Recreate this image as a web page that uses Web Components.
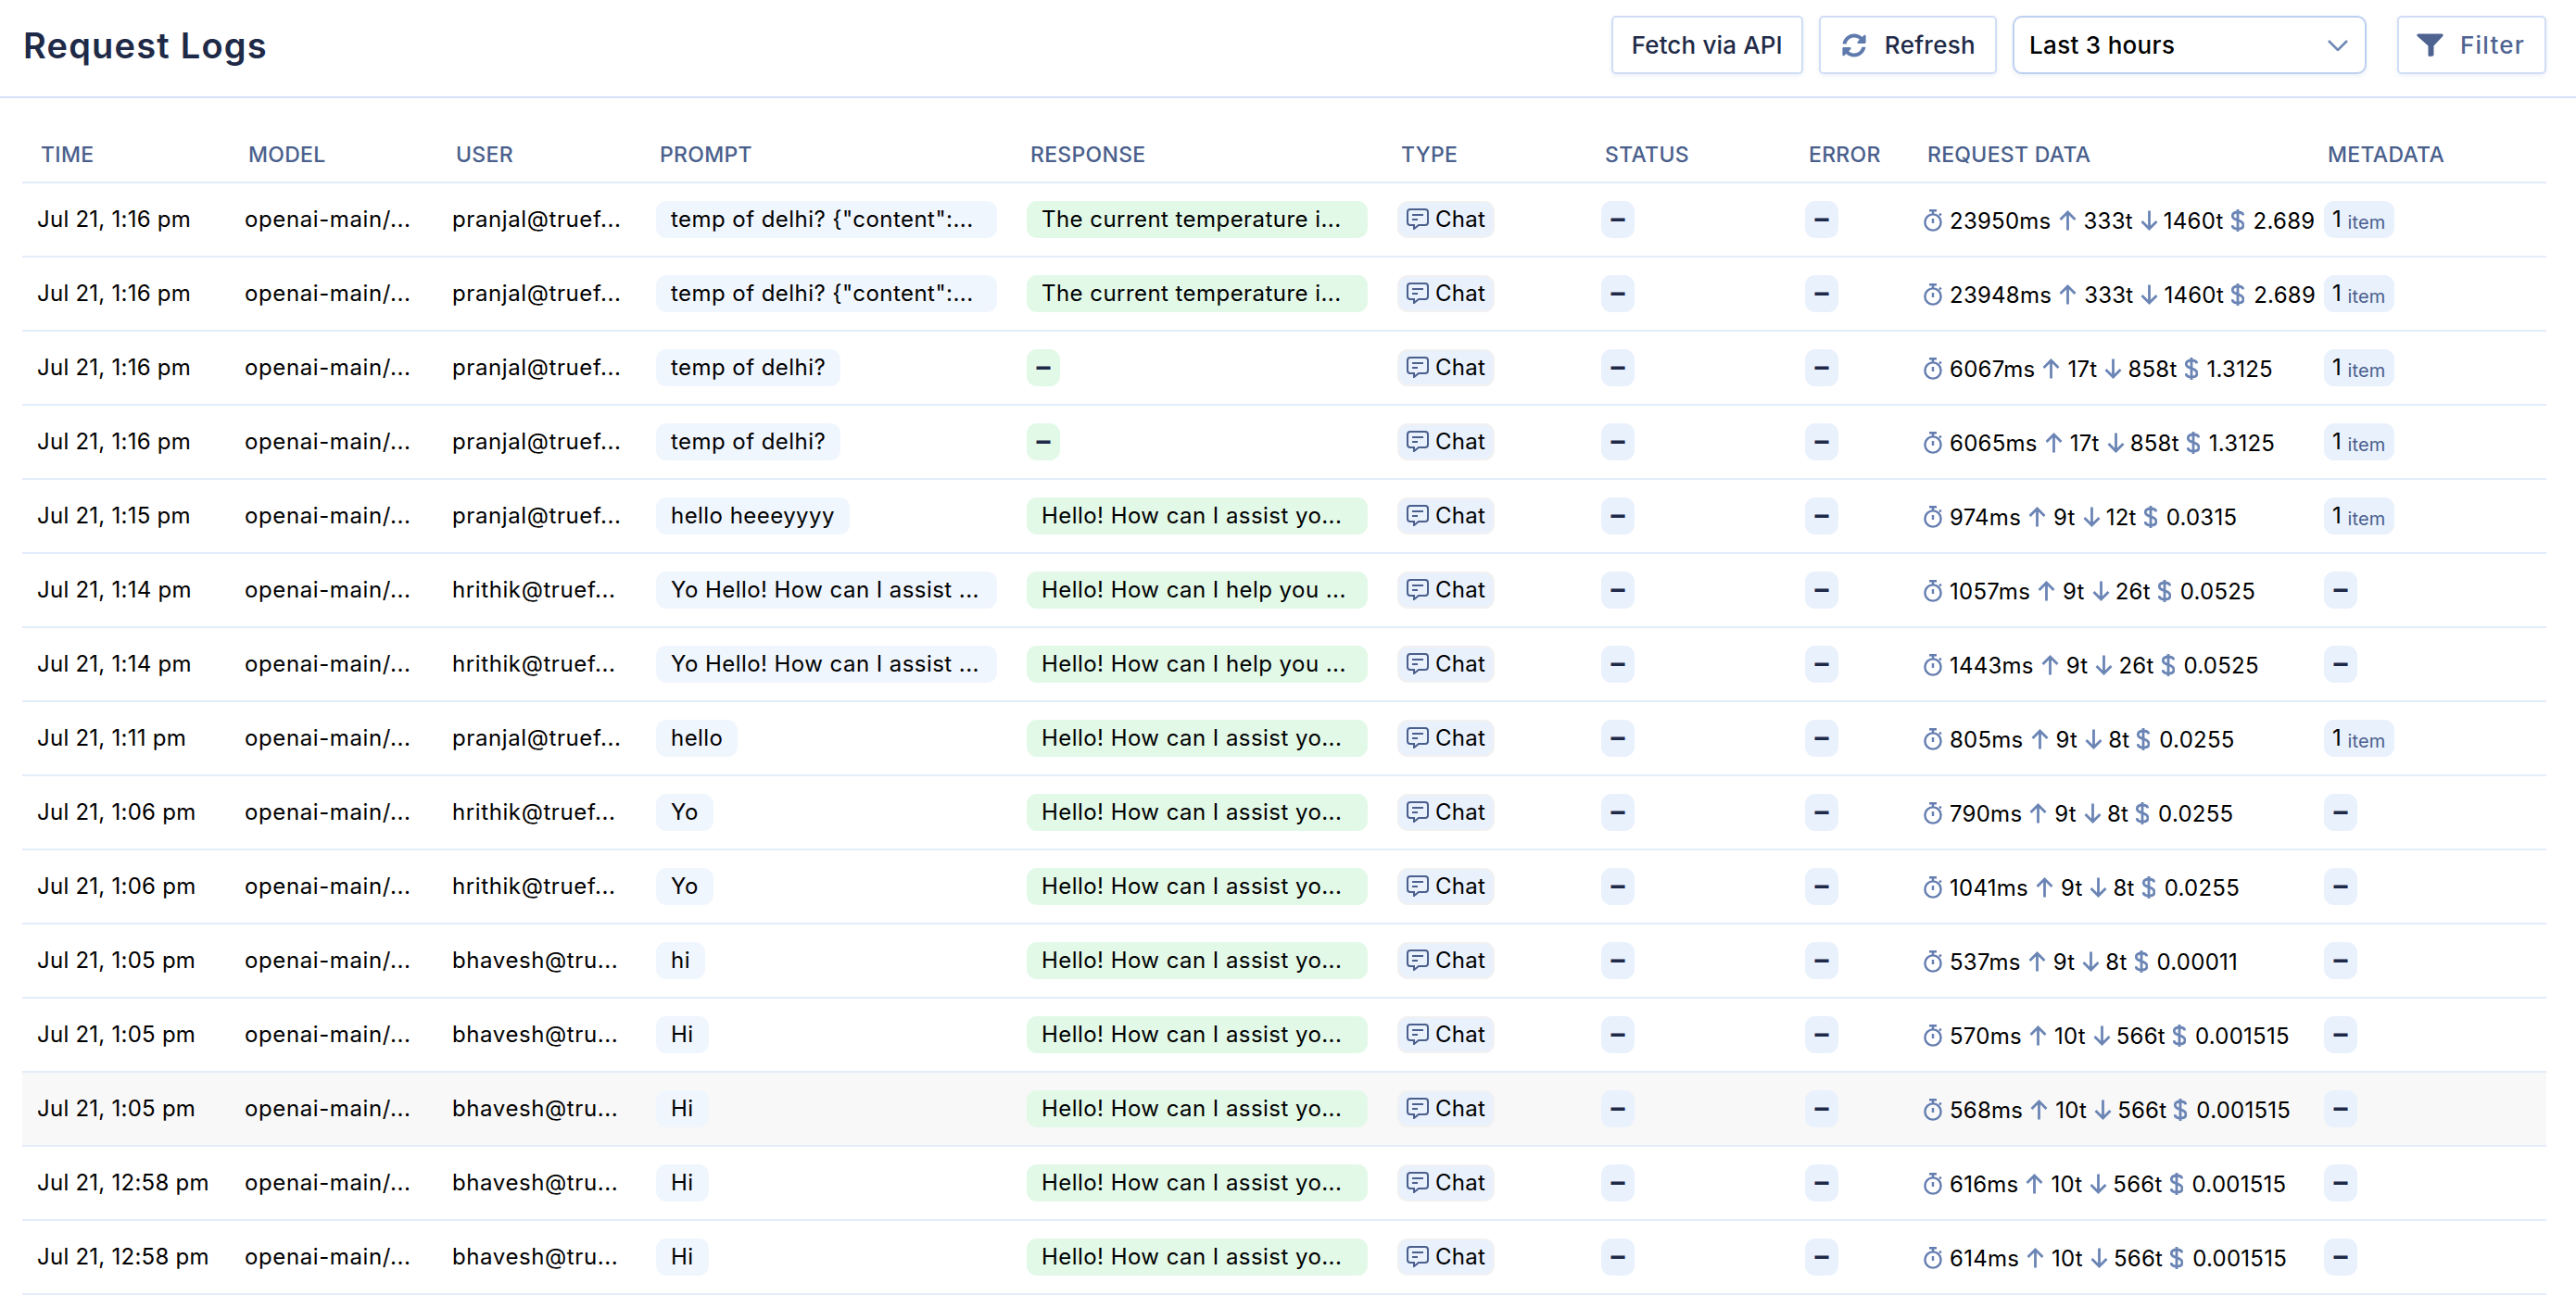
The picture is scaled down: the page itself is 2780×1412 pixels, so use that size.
<!DOCTYPE html>
<html><head><meta charset="utf-8"><title>Request Logs</title>
<style>
html,body{margin:0;background:#fff;color:#000;font-family:Inter,"Liberation Sans",sans-serif}
</style></head><body>
<log-app></log-app>
<script>
const COLS = '224px 224px 220px 400px 400px 220px 220px 128px 432px 256px'
const ICONS = {
    sync: `<svg width="26" height="26" viewBox="0 0 512 512"><path fill="#5f7bad" d="M370.72 133.28C339.458 104.008 298.888 87.962 255.848 88c-77.458.068-144.328 53.178-162.791 126.85-1.344 5.363-6.122 9.15-11.651 9.15H24.103c-7.498 0-13.194-6.807-11.807-14.176C33.933 94.924 134.813 8 256 8c66.448 0 126.791 26.136 171.315 68.685L463.03 40.97C478.149 25.851 504 36.559 504 57.941V192c0 13.255-10.745 24-24 24H345.941c-21.382 0-32.09-25.851-16.971-40.971l41.75-41.749zM32 296h134.059c21.382 0 32.09 25.851 16.971 40.971l-41.75 41.75c31.262 29.273 71.835 45.319 114.876 45.28 77.418-.07 144.315-53.144 162.787-126.849 1.344-5.363 6.122-9.15 11.651-9.15h57.304c7.498 0 13.194 6.807 11.807 14.176C478.067 417.076 377.187 504 256 504c-66.448 0-126.791-26.136-171.315-68.685L48.97 471.03C33.851 486.149 8 475.441 8 454.059V320c0-13.255 10.745-24 24-24z"/></svg>`,
    funnel: `<svg width="29" height="25" viewBox="0 0 29 25"><path fill="#4f6391" d="M2 .5h25c1.500 0 2.200 1.500 1.300 2.600L18.500 13.500v9.500c0 .8-.5 1.300-1.200 1.500l-3 .5c-1 .1-1.800-.6-1.800-1.500V13.500L.7 3.100C-.2 2 .5.500 2 .5z"/></svg>`,
    chevron: `<svg width="22" height="12" viewBox="0 0 22 12"><path d="M1 1l10 10L21 1" fill="none" stroke="#6f8ab5" stroke-width="2.600"/></svg>`,
    chat: `<svg width="24" height="23" viewBox="0 0 24 23" fill="none" stroke="#4a5f8c" stroke-width="2"><path d="M4 1h16a3 3 0 0 1 3 3v11a3 3 0 0 1-3 3H13l-5 4v-4H4a3 3 0 0 1-3-3V4a3 3 0 0 1 3-3z"/><path d="M6 7h12M6 12h6"/></svg>`,
    timer: `<svg width="20" height="24" viewBox="0 0 20 24" fill="none" stroke="#647db0" stroke-width="2.400"><circle cx="10" cy="14" r="8.600"/><path d="M6 1.200h8M10 1.200v4M10 10v5M17 6.500l1.800-1.800"/></svg>`,
    up: `<svg width="19" height="22" viewBox="0 0 19 22" fill="none" stroke="#6b85b5" stroke-width="2.800"><path d="M9.500 21.500V2M1.500 10l8-8 8 8"/></svg>`,
    down: `<svg width="19" height="22" viewBox="0 0 19 22" fill="none" stroke="#6b85b5" stroke-width="2.800"><path d="M9.500 .5V20M1.500 12l8 8 8-8"/></svg>`,
    dollar: `<svg width="14" height="24" viewBox="0 0 14 24" fill="none" stroke="#6b85b5" stroke-width="2.800"><path d="M7 0v24M12.800 6.300C12.500 3.800 10.200 3 7 3 3.800 3 1.300 4.300 1.300 7c0 6 11.700 3.400 11.700 10 0 2.700-2.500 4-6 4-3.300 0-5.700-1-6-3.800"/></svg>`
}

window.customElements.define('log-button', class extends HTMLElement {
    constructor() {
        super()
        let shadow = this.attachShadow({ mode: 'open' });
        let icon = ICONS[this.getAttribute('icon')] || ''
        shadow.innerHTML = `
        <style>
            :host {
                display: inline-flex;
                align-items: center;
                box-sizing: border-box;
                height: 63px;
                padding: 0 20px;
                gap: 20px;
                border: 2px solid #cfdef6;
                border-radius: 5px;
                box-shadow: 0 2px 5px rgba(60, 90, 150, 0.09);
                background: #fff;
                color: #1e2a47;
                font-size: 26px;
                font-weight: 500;
                letter-spacing: .15px;
                white-space: nowrap;
            }
            :host([icon]) { padding: 0 21px 0 23px; letter-spacing: .3px; }
            :host([muted]) {
                padding: 0 21px 0 19px;
                gap: 18px;
                color: #4f6391;
                letter-spacing: 1.2px;
            }
            svg { display: block; flex: none; }
        </style>
        ${icon}<slot></slot>
        `
    }
})

window.customElements.define('range-select', class extends HTMLElement {
    constructor() {
        super()
        let shadow = this.attachShadow({ mode: 'open' });
        shadow.innerHTML = `
        <style>
            :host {
                display: flex;
                align-items: center;
                justify-content: space-between;
                box-sizing: border-box;
                width: 382px;
                height: 63px;
                padding: 0 18px 0 16px;
                border: 2px solid #bcd0f0;
                border-radius: 10px;
                box-shadow: 0 2px 5px rgba(60, 90, 150, 0.09);
                background: #fff;
                font-size: 26px;
                font-weight: 500;
                letter-spacing: .3px;
            }
            svg { display: block; }
        </style>
        <slot></slot>${ICONS.chevron}
        `
    }
})

window.customElements.define('log-header', class extends HTMLElement {
    constructor() {
        super()
        let shadow = this.attachShadow({ mode: 'open' });
        shadow.innerHTML = `
        <style>
            :host {
                display: flex;
                align-items: center;
                gap: 17px;
                height: 106px;
                box-sizing: border-box;
                padding: 17px 32px 24px 25px;
                border-bottom: 2px solid #d5e2f7;
            }
            h1 {
                margin: 0 auto 0 0;
                font-size: 38px;
                font-weight: 600;
                letter-spacing: 1.2px;
                color: #1e2a47;
            }
            .filter { margin-left: 16px; }
        </style>
        <h1>Request Logs</h1>
        <log-button>Fetch via API</log-button>
        <log-button icon="sync">Refresh</log-button>
        <range-select>Last 3 hours</range-select>
        <log-button class="filter" icon="funnel" muted>Filter</log-button>
        `
    }
})

window.customElements.define('log-pill', class extends HTMLElement {
    constructor() {
        super()
        let shadow = this.attachShadow({ mode: 'open' });
        shadow.innerHTML = `
        <style>
            :host {
                display: inline-flex;
                align-items: center;
                box-sizing: border-box;
                height: 40px;
                padding: 0 16px 2px;
                border-radius: 11px;
                background: var(--pill, #f0f6fe);
                letter-spacing: .45px;
                white-space: nowrap;
            }
            :host([wide]) { width: 368px; }
            :host([dash]) {
                width: 36px;
                padding: 0 0 5px;
                justify-content: center;
                color: #1e2a47;
                font-size: 30px;
                font-weight: 700;
                letter-spacing: 0;
                line-height: 1;
            }
        </style>
        <slot></slot>
        `
    }
})

window.customElements.define('type-tag', class extends HTMLElement {
    constructor() {
        super()
        let shadow = this.attachShadow({ mode: 'open' });
        shadow.innerHTML = `
        <style>
            :host {
                display: inline-flex;
                align-items: center;
                gap: 7px;
                box-sizing: border-box;
                height: 40px;
                padding: 0 8px 2px;
                border: 2px solid #f1f1f1;
                border-radius: 11px;
                background: #e9f1fd;
                letter-spacing: .25px;
            }
            svg { display: block; }
        </style>
        ${ICONS.chat}<slot></slot>
        `
    }
})

window.customElements.define('req-stats', class extends HTMLElement {
    constructor() {
        super()
        let shadow = this.attachShadow({ mode: 'open' });
        let [ms, up, down, cost] = this.getAttribute('values').split(' ')
        shadow.innerHTML = `
        <style>
            :host {
                display: flex;
                align-items: center;
                gap: 8px;
                padding-top: 2px;
                white-space: nowrap;
                letter-spacing: .25px;
            }
            svg { display: block; flex: none; }
            svg.dollar { margin-right: 2px; }
            .tight { margin-left: -2px; }
        </style>
        ${ICONS.timer}<span>${ms}</span>
        ${ICONS.up}<span>${up}</span>
        ${ICONS.down}<span class="tight">${down}</span>
        ${ICONS.dollar.replace('<svg', '<svg class="dollar"')}<span>${cost}</span>
        `
    }
})

window.customElements.define('meta-tag', class extends HTMLElement {
    constructor() {
        super()
        let shadow = this.attachShadow({ mode: 'open' });
        shadow.innerHTML = `
        <style>
            :host {
                display: inline-flex;
                align-items: center;
                gap: 6px;
                box-sizing: border-box;
                height: 40px;
                padding: 0 9px;
                border-radius: 11px;
                background: #e9f1fd;
            }
            .n { margin-top: -2px; }
            .item { margin-top: 5px; font-size: 20px; color: #4a5f8c; letter-spacing: .2px; }
        </style>
        <span class="n">1</span><span class="item">item</span>
        `
    }
})

window.customElements.define('log-head', class extends HTMLElement {
    constructor() {
        super()
        let shadow = this.attachShadow({ mode: 'open' });
        let names = ['Time', 'Model', 'User', 'Prompt', 'Response', 'Type', 'Status', 'Error', 'Request Data', 'Metadata']
        shadow.innerHTML = `
        <style>
            :host {
                display: grid;
                grid-template-columns: ${COLS};
                padding: 45px 0 13px;
                border-bottom: 2px solid #e2ecfb;
            }
            div {
                padding-left: 20px;
                font-size: 23px;
                line-height: 32px;
                font-weight: 500;
                color: #4a5f8c;
                text-transform: uppercase;
                letter-spacing: .3px;
                white-space: nowrap;
            }
        </style>
        ${names.map(n => `<div>${n}</div>`).join('')}
        `
    }
})

window.customElements.define('log-row', class extends HTMLElement {
    constructor() {
        super()
        let shadow = this.attachShadow({ mode: 'open' });
        let a = n => this.getAttribute(n)
        let wide = t => t.endsWith('...') ? ' wide' : ''
        let res = a('response')
        shadow.innerHTML = `
        <style>
            :host {
                display: grid;
                grid-template-columns: ${COLS};
                align-items: center;
                height: 80px;
                box-sizing: border-box;
                border-bottom: 2px solid #e2ecfb;
                font-size: 24px;
                letter-spacing: .6px;
            }
            :host([hover]) { background: #f8f8f8; }
            div { padding-left: 16px; white-space: nowrap; }
            .text { padding-bottom: 2px; }
            .time { letter-spacing: .25px; }
            .green { --pill: #e2f9e8; }
            .blue { --pill: #e9f1fd; }
        </style>
        <div class="text time">${a('time')}</div>
        <div class="text">openai-main/...</div>
        <div class="text">${a('user')}</div>
        <div><log-pill${wide(a('prompt'))}>${a('prompt').replace(/"/g, '&quot;')}</log-pill></div>
        <div class="green">${res ? `<log-pill${wide(res)}>${res}</log-pill>` : '<log-pill dash>–</log-pill>'}</div>
        <div><type-tag>Chat</type-tag></div>
        <div class="blue"><log-pill dash>–</log-pill></div>
        <div class="blue"><log-pill dash>–</log-pill></div>
        <div><req-stats values="${a('stats')}"></req-stats></div>
        <div class="blue">${this.hasAttribute('meta') ? '<meta-tag></meta-tag>' : '<log-pill dash>–</log-pill>'}</div>
        `
    }
})

const ASSIST = 'Hello! How can I assist yo...'
const HELP = 'Hello! How can I help you ...'
const TEMP = 'The current temperature i...'
const PRANJAL = 'pranjal@truef...'
const HRITHIK = 'hrithik@truef...'
const BHAVESH = 'bhavesh@tru...'
const ROWS = [
    ['Jul 21, 1:16 pm', PRANJAL, 'temp of delhi? {"content":...', TEMP, '23950ms 333t 1460t 2.689', 1],
    ['Jul 21, 1:16 pm', PRANJAL, 'temp of delhi? {"content":...', TEMP, '23948ms 333t 1460t 2.689', 1],
    ['Jul 21, 1:16 pm', PRANJAL, 'temp of delhi?', '', '6067ms 17t 858t 1.3125', 1],
    ['Jul 21, 1:16 pm', PRANJAL, 'temp of delhi?', '', '6065ms 17t 858t 1.3125', 1],
    ['Jul 21, 1:15 pm', PRANJAL, 'hello heeeyyyy', ASSIST, '974ms 9t 12t 0.0315', 1],
    ['Jul 21, 1:14 pm', HRITHIK, 'Yo Hello! How can I assist ...', HELP, '1057ms 9t 26t 0.0525', 0],
    ['Jul 21, 1:14 pm', HRITHIK, 'Yo Hello! How can I assist ...', HELP, '1443ms 9t 26t 0.0525', 0],
    ['Jul 21, 1:11 pm', PRANJAL, 'hello', ASSIST, '805ms 9t 8t 0.0255', 1],
    ['Jul 21, 1:06 pm', HRITHIK, 'Yo', ASSIST, '790ms 9t 8t 0.0255', 0],
    ['Jul 21, 1:06 pm', HRITHIK, 'Yo', ASSIST, '1041ms 9t 8t 0.0255', 0],
    ['Jul 21, 1:05 pm', BHAVESH, 'hi', ASSIST, '537ms 9t 8t 0.00011', 0],
    ['Jul 21, 1:05 pm', BHAVESH, 'Hi', ASSIST, '570ms 10t 566t 0.001515', 0],
    ['Jul 21, 1:05 pm', BHAVESH, 'Hi', ASSIST, '568ms 10t 566t 0.001515', 0],
    ['Jul 21, 12:58 pm', BHAVESH, 'Hi', ASSIST, '616ms 10t 566t 0.001515', 0],
    ['Jul 21, 12:58 pm', BHAVESH, 'Hi', ASSIST, '614ms 10t 566t 0.001515', 0]
]

window.customElements.define('log-app', class extends HTMLElement {
    constructor() {
        super()
        let shadow = this.attachShadow({ mode: 'open' });
        let esc = s => s.replace(/"/g, '&quot;')
        shadow.innerHTML = `
        <style>
            :host { display: block; }
            .table { padding: 0 32px 0 24px; }
        </style>
        <log-header></log-header>
        <div class="table">
            <log-head></log-head>
            ${ROWS.map((r, i) => `<log-row time="${r[0]}" user="${r[1]}" prompt="${esc(r[2])}" response="${r[3]}" stats="${r[4]}"${r[5] ? ' meta' : ''}${i == 12 ? ' hover' : ''}></log-row>`).join('')}
        </div>
        `
    }
})
</script></body></html>
